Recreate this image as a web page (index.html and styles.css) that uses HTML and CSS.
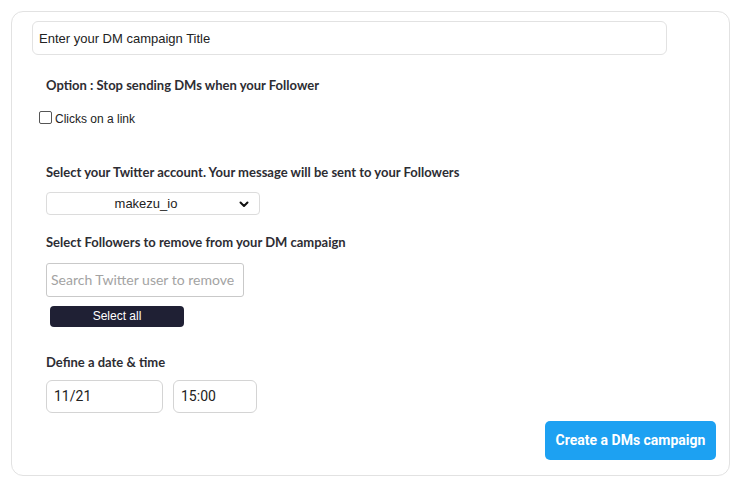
FILE: index.html
```html
<!DOCTYPE html>
<html>
<head>
<meta charset="utf-8">
<link rel="stylesheet" href="styles.css">
</head>
<body>
<div class="card">
  <div class="title-input">Enter your DM campaign Title</div>
  <div class="label option-label">Option : Stop sending DMs when your Follower</div>
  <label class="check-row"><span class="checkbox"></span><span class="check-text">Clicks on a link</span></label>
  <div class="label account-label">Select your Twitter account. Your message will be sent to your Followers</div>
  <div class="select">
    <span class="select-text">makezu_io</span>
    <svg class="chevron" width="10" height="7" viewBox="0 0 10 7"><path d="M1.5 1.5 L5 5 L8.5 1.5" fill="none" stroke="#111" stroke-width="2" stroke-linecap="round" stroke-linejoin="round"/></svg>
  </div>
  <div class="label followers-label">Select Followers to remove from your DM campaign</div>
  <div class="search">Search Twitter user to remove</div>
  <div class="select-all">Select all</div>
  <div class="label date-label">Define a date &amp; time</div>
  <div class="date-row">
    <div class="field date">11/21</div>
    <div class="field time">15:00</div>
  </div>
  <div class="actions">
    <div class="create">Create a DMs campaign</div>
  </div>
</div>
</body>
</html>
```
FILE: styles.css
```css
html, body {
  margin: 0;
  padding: 0;
  background: #ffffff;
}
body {
  width: 740px;
  height: 486px;
  font-family: "Liberation Sans", Arial, sans-serif;
  color: #222;
}
.card {
  box-sizing: border-box;
  margin: 11px 0 0 11px;
  width: 719px;
  height: 465px;
  border: 1px solid #e2e2e2;
  border-radius: 12px;
  padding: 9px 0 0 20px;
  display: flex;
  flex-direction: column;
  align-items: flex-start;
}
.title-input {
  box-sizing: border-box;
  width: 635px;
  height: 34px;
  border: 1px solid #e2e2e2;
  border-radius: 6px;
  padding-left: 6px;
  font-size: 13px;
  line-height: 33px;
  color: #222;
}
.label {
  font-family: Lato, sans-serif;
  font-weight: 700;
  font-size: 13px;
  color: #2d2d33;
  line-height: 16px;
  margin-left: 14px;
}
.option-label { margin-top: 22px; }
.check-row {
  display: flex;
  align-items: center;
  margin-top: 15px;
  margin-left: 7px;
}
.checkbox {
  box-sizing: border-box;
  width: 13px;
  height: 13px;
  border: 1px solid #555;
  border-radius: 2px;
  background: #fff;
}
.check-text {
  font-size: 12px;
  margin-left: 3px;
  margin-top: 4px;
  color: #222;
}
.account-label { margin-top: 38px; }
.select {
  box-sizing: border-box;
  margin: 12px 0 0 14px;
  width: 214px;
  height: 23px;
  border: 1px solid #dcdcdc;
  border-radius: 4px;
  display: flex;
  align-items: center;
  position: relative;
}
.select-text {
  flex: 1;
  text-align: center;
  font-size: 13px;
  color: #222;
  padding-right: 14px;
}
.chevron {
  position: absolute;
  right: 10px;
  top: 8px;
}
.followers-label { margin-top: 19px; }
.search {
  box-sizing: border-box;
  margin: 13px 0 0 14px;
  width: 198px;
  height: 34px;
  border: 1px solid #c9c9c9;
  border-radius: 3px;
  padding-left: 4px;
  font-family: Lato, sans-serif;
  font-size: 14px;
  line-height: 32px;
  color: #a3a3a3;
  white-space: nowrap;
  overflow: hidden;
}
.select-all {
  box-sizing: border-box;
  margin: 9px 0 0 18px;
  width: 134px;
  height: 21px;
  background: #1f2034;
  border-radius: 4px;
  color: #fff;
  font-size: 12px;
  line-height: 21px;
  text-align: center;
}
.date-label { margin-top: 27px; }
.date-row {
  display: flex;
  gap: 10px;
  margin: 10px 0 0 14px;
}
.field {
  box-sizing: border-box;
  height: 33px;
  border: 1px solid #d4d4d4;
  border-radius: 6px;
  padding-left: 7px;
  font-family: Roboto, sans-serif;
  font-size: 14px;
  line-height: 31px;
  color: #222;
}
.date { width: 117px; }
.time { width: 84px; }
.actions {
  align-self: stretch;
  display: flex;
  justify-content: flex-end;
  margin-top: 8px;
  padding-right: 13px;
}
.create {
  box-sizing: border-box;
  width: 171px;
  height: 39px;
  background: #1da1f2;
  border-radius: 5px;
  color: #fff;
  font-family: Roboto, sans-serif;
  font-weight: 700;
  font-size: 14px;
  line-height: 39px;
  text-align: center;
}
```
